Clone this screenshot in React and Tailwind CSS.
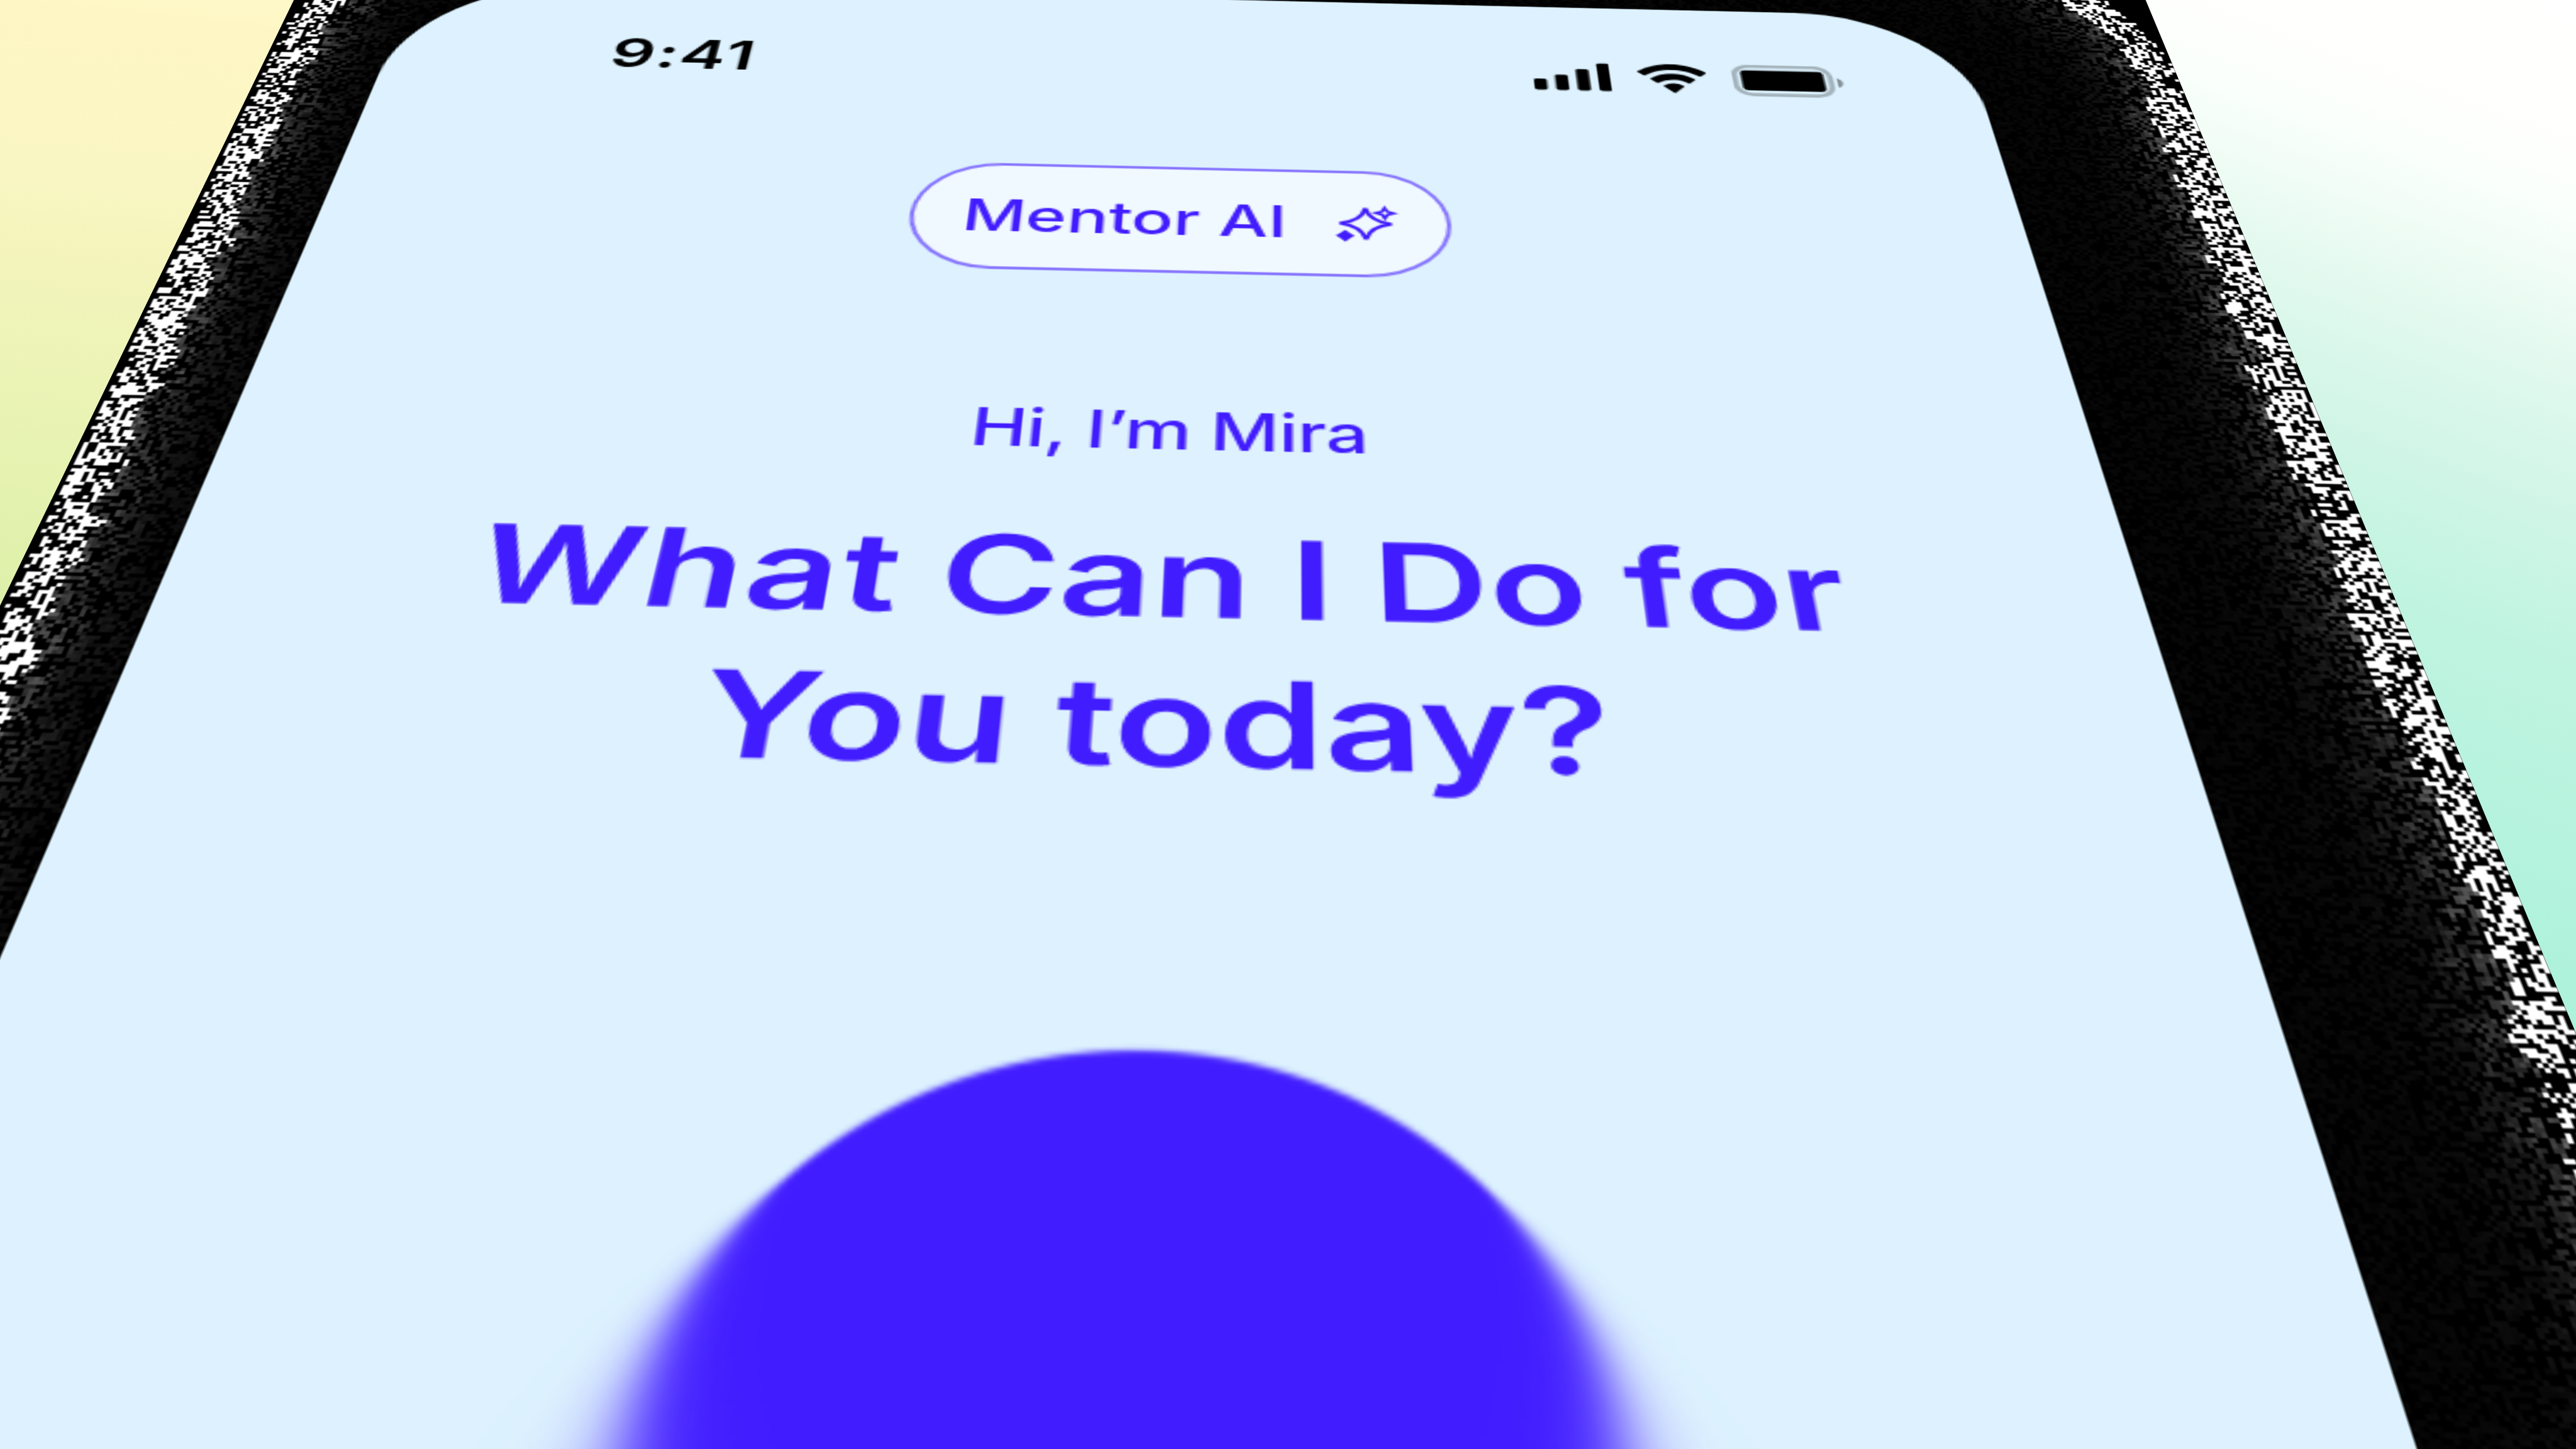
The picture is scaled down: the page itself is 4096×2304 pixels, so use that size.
import { useEffect, useRef } from 'react'

const BEZEL = { left: 29, right: 51, top: 60 }
const SCREEN_W = 393
const BODY_W = BEZEL.left + SCREEN_W + BEZEL.right
const BODY_H = 530

// Projection of the device plane onto the 4096x2304 canvas.
const K = 4096 / 5760
const TL = [936, -42.5]
const TR = [4374, 37.3]
const VANISH = [2885, -4592]
const Q = 1.0055
const C = -0.001055

function deviceMatrix() {
  const h1 = [(Q * TR[0] - TL[0]) / SCREEN_W, (Q * TR[1] - TL[1]) / SCREEN_W]
  const g = (Q - 1) / SCREEN_W
  const m = [
    h1[0] * K, h1[1] * K, 0, g,
    C * VANISH[0] * K, C * VANISH[1] * K, 0, C,
    0, 0, 1, 0,
    TL[0] * K, TL[1] * K, 0, 1,
  ]
  return `matrix3d(${m.join(',')}) translate(${-BEZEL.left}px, ${-BEZEL.top}px) scale(0.5)`
}

function makeRandom(seed) {
  let a = seed
  return () => {
    a = (a + 0x6d2b79f5) | 0
    let t = Math.imul(a ^ (a >>> 15), 1 | a)
    t = (t + Math.imul(t ^ (t >>> 7), 61 | t)) ^ t
    return ((t ^ (t >>> 14)) >>> 0) / 4294967296
  }
}

function makeSmoothNoise(cell, seed) {
  const rnd = makeRandom(seed)
  const n = 200
  const grid = Array.from({ length: n * n }, () => rnd())
  return (x, y) => {
    const gx = x / cell
    const gy = y / cell
    const ix = Math.floor(gx)
    const iy = Math.floor(gy)
    const fx = gx - ix
    const fy = gy - iy
    const at = (i, j) => grid[(j % n) * n + (i % n)]
    const a = at(ix, iy) * (1 - fx) + at(ix + 1, iy) * fx
    const b = at(ix, iy + 1) * (1 - fx) + at(ix + 1, iy + 1) * fx
    return a * (1 - fy) + b * fy
  }
}

// Brushed grain of the metal frame, bright along the rim.
function paintGrain(ctx) {
  const rnd = makeRandom(41)
  const wave = makeSmoothNoise(3.5, 7)
  const img = ctx.createImageData(BODY_W, BODY_H)
  const R = 80
  const top = 11
  for (let y = 0; y < BODY_H; y++) {
    for (let x = 0; x < BODY_W; x++) {
      const cx = Math.max(R - x, x - (BODY_W - R), 0)
      const cy = Math.max(R + top - y, 0)
      const d = R - Math.hypot(cx, cy)
      const r = rnd()
      const r2 = rnd()
      const dd = d + (wave(x, y) - 0.5) * 6
      let v = 0
      if (d > 0) {
        if (dd < 10) v = r < (d < 2 ? 0.38 : 0.54) ? 255 : 0
        else if (r < 0.52) v = (92 * Math.exp(-(dd - 10) / 6.5) + 7) * (0.5 + 0.6 * r2)
      }
      const i = (y * BODY_W + x) * 4
      img.data[i] = v
      img.data[i + 1] = v
      img.data[i + 2] = v
      img.data[i + 3] = 255
    }
  }
  ctx.putImageData(img, 0, 0)
}

const ORB_W = 240
const ORB_H = 130

// Disc whose rim is crisp at the top and softens on the way down.
function paintOrb(ctx) {
  const img = ctx.createImageData(ORB_W, ORB_H)
  const R = 75.3
  const sub = [-0.25, 0.25]
  for (let y = 0; y < ORB_H; y++) {
    for (let x = 0; x < ORB_W; x++) {
      let a = 0
      for (const ox of sub) {
        for (const oy of sub) {
          const py = y + 0.5 + oy - 10
          const r = Math.hypot(x + 0.5 + ox - ORB_W / 2, py - R)
          const sigma = 0.3 + Math.max(0, py - 26) * 0.122
          a += 1 / (1 + Math.exp((1.7 * (r - R)) / sigma)) / 4
        }
      }
      const i = (y * ORB_W + x) * 4
      img.data[i] = 65
      img.data[i + 1] = 28
      img.data[i + 2] = 255
      img.data[i + 3] = Math.round(a * 255)
    }
  }
  ctx.putImageData(img, 0, 0)
}

function Painted({ width, height, paint, className }) {
  const ref = useRef(null)
  useEffect(() => {
    paint(ref.current.getContext('2d'))
  }, [paint])
  return <canvas ref={ref} width={width} height={height} className={className} />
}

function Signal() {
  return (
    <svg width="19.2" height="12.2" viewBox="0 0 19.2 12.2">
      <rect x="0" y="7.5" width="3.2" height="4.7" rx="0.7" />
      <rect x="5.33" y="5.6" width="3.2" height="6.6" rx="0.7" />
      <rect x="10.67" y="3" width="3.2" height="9.2" rx="0.7" />
      <rect x="16" y="0.4" width="3.2" height="11.8" rx="0.7" />
    </svg>
  )
}

function Wifi() {
  return (
    <svg width="17.14" height="12.33" viewBox="0 0 17.14 12.33">
      <path d="M8.57 2.47c2.49 0 4.88.92 6.68 2.57.14.13.36.13.49 0l1.3-1.27a.35.35 0 0 0 0-.49C12.3-1.09 4.84-1.09.11 3.28a.35.35 0 0 0 0 .49L1.4 5.04c.13.13.35.13.49 0 1.8-1.65 4.19-2.57 6.68-2.57Z" />
      <path d="M8.57 6.69c1.36 0 2.66.51 3.67 1.43.14.13.35.13.48 0l1.29-1.32a.37.37 0 0 0 0-.52 7.93 7.93 0 0 0-10.88 0 .37.37 0 0 0 0 .52l1.29 1.32c.13.13.34.13.48 0a5.45 5.45 0 0 1 3.67-1.43Z" />
      <path d="M11.09 9.48a.4.4 0 0 1-.1.28l-2.18 2.46a.32.32 0 0 1-.48 0L6.15 9.76a.4.4 0 0 1 .01-.56 3.57 3.57 0 0 1 4.82 0c.07.07.11.17.11.28Z" />
    </svg>
  )
}

function Battery() {
  return (
    <svg width="27.33" height="13.4" viewBox="0 0 27.33 13.4">
      <rect x="0.6" y="0.6" width="23.8" height="12.2" rx="3.9" fill="none" stroke="black" strokeOpacity="0.26" strokeWidth="1.4" />
      <path d="M26 4.98v4.08c.8-.34 1.33-1.14 1.33-2.04S26.8 5.32 26 4.98Z" fillOpacity="0.4" />
      <rect x="2.2" y="2.4" width="20.6" height="8.6" rx="1.2" />
    </svg>
  )
}

function Sparkles() {
  return (
    <svg width="16" height="16" viewBox="0 0 16 16" fill="none" stroke="#411cff">
      <path d="M8.2 1.9C8.8 5.2 10.6 7.1 14.2 7.8 10.6 8.5 8.8 10.4 8.2 13.7 7.6 10.4 5.8 8.5 2.2 7.8 5.8 7.1 7.6 5.2 8.2 1.9Z" strokeWidth="1" />
      <path d="M12.7 1.6 13.3 3 14.8 3.6 13.3 4.2 12.7 5.6 12.1 4.2 10.6 3.6 12.1 3Z" strokeWidth="0.8" />
      <path d="M3.4 10.6 4.3 11.6 5.2 12.4 4.3 13.2 3.4 14.2 2.5 13.2 1.6 12.4 2.5 11.6Z" fill="#411cff" strokeWidth="0.5" />
    </svg>
  )
}

function Device() {
  return (
    <div
      className="h-[1060px] w-[946px] origin-top-left will-change-transform"
      style={{ transform: deviceMatrix() }}
    >
      <div className="relative h-[530px] w-[473px] overflow-hidden bg-black pt-[60px] pl-[29px] [zoom:2]">
        <Painted width={BODY_W} height={BODY_H} paint={paintGrain} className="absolute inset-0 h-[530px] w-[473px] [image-rendering:pixelated]" />
        <main className="relative flex h-[470px] w-[393px] flex-col items-center overflow-hidden rounded-t-[42px] bg-[#ddf2fe] text-[#411cff] blur-[0.3px]">
          <header className="flex h-[61px] w-full shrink-0 items-center justify-between pr-[33.5px] pl-[54.5px] text-black">
            <time className="-mt-[1.5px] text-[17px] leading-[22px] font-semibold tracking-[0.35px]">9:41</time>
            <div className="flex items-center pt-[0.5px]">
              <Signal />
              <div className="flex items-center gap-[6.5px] pl-[6.8px]">
                <Wifi />
                <Battery />
              </div>
            </div>
          </header>
          <button className="mt-[10.8px] ml-px flex h-[40px] w-[125px] shrink-0 items-center justify-between rounded-full border border-[#411cff]/60 bg-[#f0f9ff] pt-[1.2px] pr-[11.2px] pl-[11.2px] text-[16px] leading-[20px] font-medium whitespace-nowrap">
            Mentor AI
            <Sparkles />
          </button>
          <p className="mt-[43.8px] ml-[0.5px] text-[16px] leading-[20px] font-[450] tracking-[-0.15px] whitespace-nowrap">Hi, I’m Mira</p>
          <h1 className="mt-[12.2px] ml-px scale-x-[1.007] scale-y-[0.955] text-center text-[32px] leading-[40.4px] font-semibold whitespace-nowrap">
            <span className="[word-spacing:-0.55px]">
              <span className="tracking-[0.5px]">What</span> Can I Do for
            </span>
            <br />
            You today?
          </h1>
          <Painted width={ORB_W} height={ORB_H} paint={paintOrb} className="mt-[43.3px] ml-[2px] h-[130px] w-[240px] shrink-0" />
        </main>
      </div>
    </div>
  )
}

export default function App() {
  return (
    <div className="h-[2304px] w-[4096px] overflow-hidden bg-[linear-gradient(200deg,#ffffff_0,#fffffd_200px,#f9fffa_329px,#eefcf4_440px,#e2f9ee_560px,#d9f7eb_660px,#cff5e6_790px,#c0f4e1_990px,#aff2dc_1450px,#a8f1da_1750px)] font-['Inter',sans-serif]">
      <div className="h-full w-[1200px] bg-[linear-gradient(186deg,#fefad0_0,#fef7c5_125px,#faf6c4_370px,#f3f4bb_530px,#e8f3b3_800px,#dcf0a8_1110px)]">
        <Device />
      </div>
    </div>
  )
}
